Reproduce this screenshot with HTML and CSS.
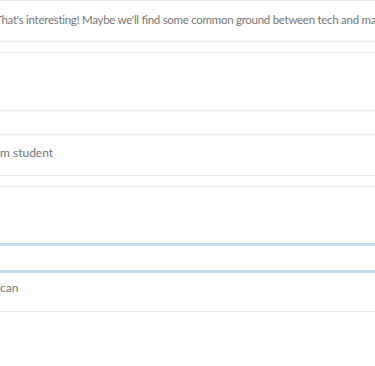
FILE: index.html
```html
<!doctype html>
<html lang="en">
  <head>
    <meta charset="UTF-8" />
    <meta name="viewport" content="width=device-width, initial-scale=1.0" />
    <title>Chat log</title>
    <link rel="stylesheet" href="styles.css">
  </head>
  <body>
    <div class="log">
      <div class="row msg">
        <p class="text first">That's interesting! Maybe we'll find some common ground between tech and mar</p>
      </div>
      <div class="row blank"></div>
      <div class="row msg">
        <p class="text">m student</p>
      </div>
      <div class="row blank tall"></div>
      <div class="focus-box"></div>
      <div class="row msg after-focus">
        <p class="text">can</p>
      </div>
    </div>
  </body>
</html>
```

FILE: styles.css
```css
body {
  margin: 0;
  background: #ffffff;
  font-family: Lato, "Noto Sans", sans-serif;
  overflow: hidden;
}
.log {
  display: flex;
  flex-direction: column;
}
.row {
  border-top: 1px solid #ececec;
  border-bottom: 1px solid #ececec;
  margin-bottom: 10px;
  overflow: hidden;
}
.msg {
  height: 40px;
  display: flex;
  align-items: center;
}
.blank {
  height: 57px;
  margin-bottom: 23px;
}
.blank.tall {
  height: 56px;
  margin-bottom: 0;
  border-bottom: none;
}
.text {
  margin: 0 0 6px 0;
  font-size: 12px;
  color: #767676;
  white-space: nowrap;
}
.text.first {
  margin-left: -5px;
  margin-bottom: 3px;
  font-size: 11.5px;
  letter-spacing: -0.28px;
}
.focus-box {
  height: 24px;
  border-top: 3px solid #c4d9f6;
  border-bottom: 3px solid #c4d9f6;
}
.after-focus {
  border-top: none;
  height: 38px;
}
.after-focus .text {
  margin-bottom: 9px;
}
```
